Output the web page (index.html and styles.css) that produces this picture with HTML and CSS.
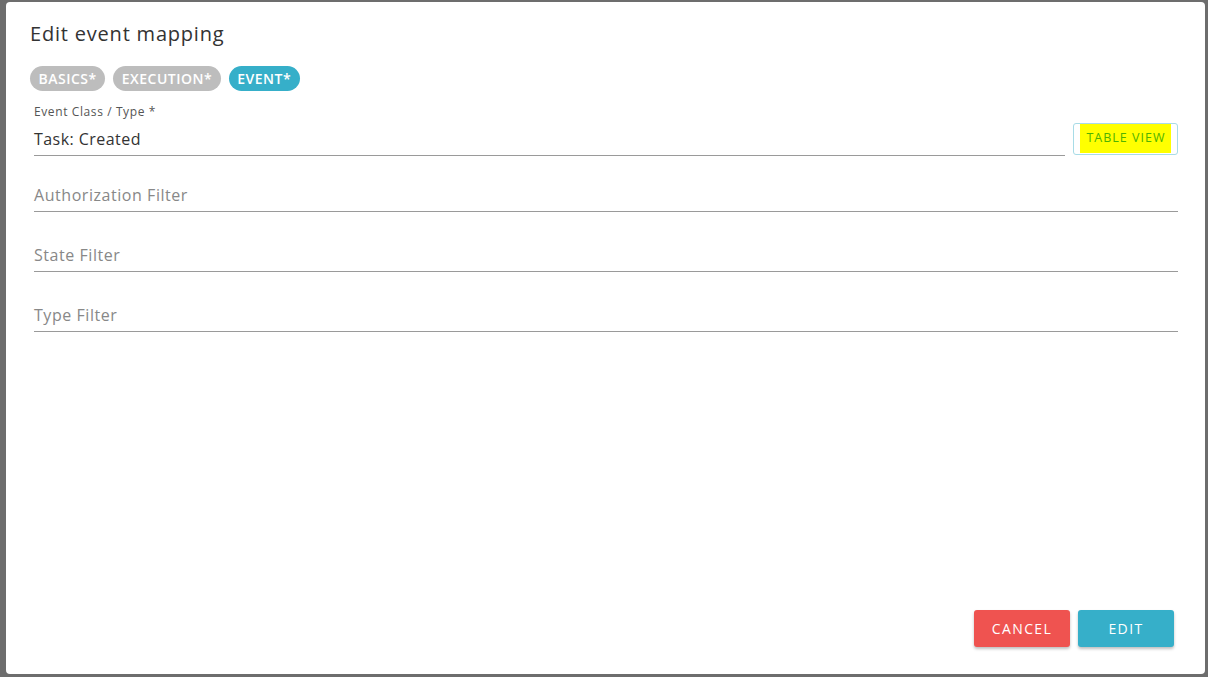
FILE: index.html
```html
<!DOCTYPE html>
<html lang="en">
<head>
<meta charset="utf-8">
<title>Edit event mapping</title>
<link rel="stylesheet" href="styles.css">
</head>
<body>
<div class="backdrop">
  <div class="modal">
    <h1 class="title">Edit event mapping</h1>
    <div class="chips">
      <span class="chip">BASICS*</span>
      <span class="chip">EXECUTION*</span>
      <span class="chip chip-active">EVENT*</span>
    </div>
    <div class="form">
      <div class="field-label">Event Class / Type *</div>
      <div class="row">
        <div class="input filled">Task: Created</div>
        <button class="table-btn"><span class="hl">TABLE VIEW</span></button>
      </div>
      <div class="input placeholder first">Authorization Filter</div>
      <div class="input placeholder spaced">State Filter</div>
      <div class="input placeholder spaced">Type Filter</div>
    </div>
    <div class="footer">
      <button class="btn btn-cancel">CANCEL</button>
      <button class="btn btn-edit">EDIT</button>
    </div>
  </div>
</div>
</body>
</html>
```

FILE: styles.css
```css
* { box-sizing: border-box; }
html, body {
  margin: 0;
  padding: 0;
  height: 100%;
}
body {
  font-family: "Open Sans", "Liberation Sans", sans-serif;
  background: #6d6d6d;
}
.backdrop {
  height: 677px;
  padding: 2px 3px 3px 6px;
  display: flex;
}
.modal {
  flex: 1;
  background: #fff;
  border-radius: 4px;
  padding: 20px 27px 27px 24px;
  display: flex;
  flex-direction: column;
}
.title {
  margin: 0;
  font-size: 20px;
  line-height: 24px;
  font-weight: 400;
  color: #333;
  letter-spacing: 0.8px;
}
.chips {
  display: flex;
  gap: 8px;
  margin-top: 20px;
}
.chip {
  height: 25px;
  line-height: 25px;
  padding: 0 8.5px;
  border-radius: 13px;
  background: #bdbdbd;
  color: #fff;
  font-size: 14px;
  font-weight: 600;
  letter-spacing: 0.5px;
}
.chip-active { background: #36afc9; }
.form {
  padding-left: 4px;
}
.field-label {
  margin-top: 14px;
  font-size: 12px;
  line-height: 14px;
  color: #555;
  letter-spacing: 0.6px;
}
.row {
  display: flex;
  gap: 8px;
  margin-top: 3px;
  align-items: flex-end;
}
.row .input { flex: 1; }
.input {
  height: 34px;
  border-bottom: 1px solid #9a9a9a;
  font-size: 16px;
  line-height: 20px;
  padding-top: 7px;
  letter-spacing: 0.55px;
}
.filled { color: #333; letter-spacing: 0.45px; }
.placeholder { color: #888; }
.first { margin-top: 22px; }
.spaced { margin-top: 26px; }
.table-btn {
  height: 32px;
  width: 105px;
  background: #fff;
  border: 1px solid #a8dce7;
  border-radius: 3px;
  padding: 0 0 5px;
  font-family: inherit;
  font-size: 12.5px;
  display: flex;
  align-items: flex-start;
  justify-content: center;
  margin-bottom: 1px;
}
.hl {
  background: #ffff00;
  color: #4fb300;
  padding: 7px 5px 8px 6px;
  letter-spacing: 1px;
  line-height: 14px;
}
.footer {
  margin-top: auto;
  display: flex;
  justify-content: flex-end;
  gap: 8px;
  padding-right: 4px;
}
.btn {
  width: 96px;
  height: 37px;
  border: none;
  border-radius: 3px;
  color: #fff;
  font-family: inherit;
  font-size: 14px;
  font-weight: 500;
  letter-spacing: 1.4px;
  box-shadow: 0 2px 3px rgba(0,0,0,0.25);
}
.btn-cancel { background: #ef5350; }
.btn-edit { background: #36afc9; }
```
